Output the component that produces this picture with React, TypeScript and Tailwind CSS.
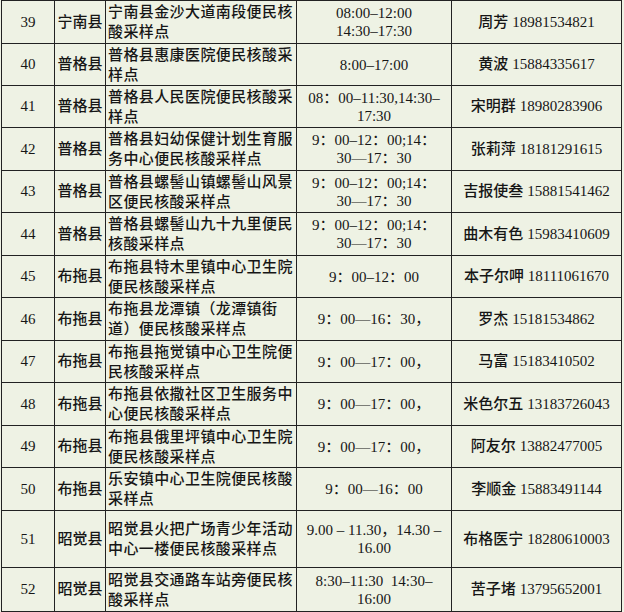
import React from 'react'

interface Site {
  no: number
  county: string
  addr: string[]
  time: string[]
  contact: string
  phone: string
  h: number
}

const sites: Site[] = [
  { no: 39, county: '宁南县', addr: ['宁南县金沙大道南段便民核', '酸采样点'], time: ['08:00–12:00', '14:30–17:30'], contact: '周芳', phone: '18981534821', h: 43 },
  { no: 40, county: '普格县', addr: ['普格县惠康医院便民核酸采', '样点'], time: ['8:00–17:00'], contact: '黄波', phone: '15884335617', h: 42 },
  { no: 41, county: '普格县', addr: ['普格县人民医院便民核酸采', '样点'], time: ['08：00–11:30,14:30–', '17:30'], contact: '宋明群', phone: '18980283906', h: 42 },
  { no: 42, county: '普格县', addr: ['普格县妇幼保健计划生育服', '务中心便民核酸采样点'], time: ['9：00–12：00;14：', '30—17：30'], contact: '张莉萍', phone: '18181291615', h: 43 },
  { no: 43, county: '普格县', addr: ['普格县螺髻山镇螺髻山风景', '区便民核酸采样点'], time: ['9：00–12：00;14：', '30—17：30'], contact: '吉报使叁', phone: '15881541462', h: 42 },
  { no: 44, county: '普格县', addr: ['普格县螺髻山九十九里便民', '核酸采样点'], time: ['9：00–12：00;14：', '30—17：30'], contact: '曲木有色', phone: '15983410609', h: 43 },
  { no: 45, county: '布拖县', addr: ['布拖县特木里镇中心卫生院', '便民核酸采样点'], time: ['9：00–12：00'], contact: '本子尔呷', phone: '18111061670', h: 42 },
  { no: 46, county: '布拖县', addr: ['布拖县龙潭镇（龙潭镇街', '道）便民核酸采样点'], time: ['9：00—16：30，'], contact: '罗杰', phone: '15181534862', h: 43 },
  { no: 47, county: '布拖县', addr: ['布拖县拖觉镇中心卫生院便', '民核酸采样点'], time: ['9：00—17：00，'], contact: '马富', phone: '15183410502', h: 42 },
  { no: 48, county: '布拖县', addr: ['布拖县依撒社区卫生服务中', '心便民核酸采样点'], time: ['9：00—17：00，'], contact: '米色尔五', phone: '13183726043', h: 43 },
  { no: 49, county: '布拖县', addr: ['布拖县俄里坪镇中心卫生院', '便民核酸采样点'], time: ['9：00—17：00，'], contact: '阿友尔', phone: '13882477005', h: 42 },
  { no: 50, county: '布拖县', addr: ['乐安镇中心卫生院便民核酸', '采样点'], time: ['9：00—16：00'], contact: '李顺金', phone: '15883491144', h: 43 },
  { no: 51, county: '昭觉县', addr: ['昭觉县火把广场青少年活动', '中心一楼便民核酸采样点'], time: ['9.00 – 11.30，14.30 –', '16.00'], contact: '布格医宁', phone: '18280610003', h: 57 },
  { no: 52, county: '昭觉县', addr: ['昭觉县交通路车站旁便民核', '酸采样点'], time: ['8:30–11:30\u00a0\u00a014:30–', '16:00'], contact: '苦子堵', phone: '13795652001', h: 44 },
]

const cell = 'border border-[#222] align-middle p-0'

export default function App() {
  return (
    <div
      className="w-[624px] h-[612px] bg-[#eef2e4] pl-[1px] text-[15px] text-[#161616]"
      style={{ fontFamily: '"Liberation Serif", "Noto Sans CJK SC", serif' }}
    >
      <table className="border-collapse table-fixed w-[620px]">
        <colgroup>
          <col className="w-[53px]" />
          <col className="w-[51px]" />
          <col className="w-[191px]" />
          <col className="w-[155px]" />
          <col className="w-[170px]" />
        </colgroup>
        <tbody>
          {sites.map((s) => (
            <tr key={s.no} style={{ height: s.h }}>
              <td className={`${cell} text-center`}>{s.no}</td>
              <td className={`${cell} text-center font-medium whitespace-nowrap`}>{s.county}</td>
              <td className={`${cell} pl-[2px] font-medium leading-[20px] tracking-[0.4px] whitespace-nowrap`}>
                {s.addr.map((l, i) => (
                  <div key={i}>{l}</div>
                ))}
              </td>
              <td className={`${cell} text-center leading-[18px] whitespace-nowrap`}>
                {s.time.map((l, i) => (
                  <div key={i}>{l}</div>
                ))}
              </td>
              <td className={`${cell} text-center whitespace-nowrap`}>
                <span className="font-medium">{s.contact}</span> {s.phone}
              </td>
            </tr>
          ))}
        </tbody>
      </table>
    </div>
  )
}
